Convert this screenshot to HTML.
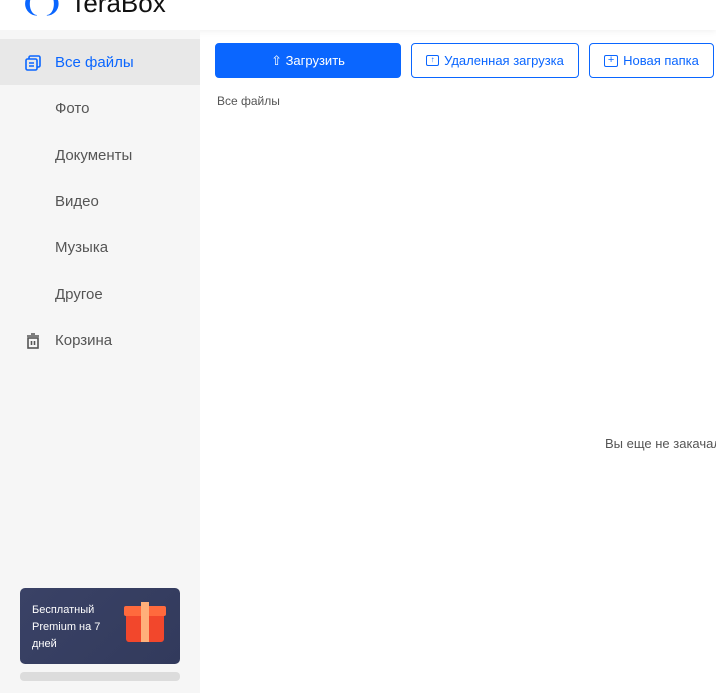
<!DOCTYPE html>
<html><head><meta charset="utf-8"><style>
*{margin:0;padding:0;box-sizing:border-box}
body{width:716px;height:693px;overflow:hidden;background:#fff;font-family:"Liberation Sans",sans-serif;position:relative}
.top{position:absolute;left:0;top:0;width:716px;height:30px;background:#fff;box-shadow:0 2px 6px rgba(0,0,0,.05)}
.logo{position:absolute;left:20px;top:-12px;font-size:26px;color:#111;font-weight:500}
.side{position:absolute;left:0;top:30px;width:200px;height:663px;background:#f6f6f6}
.item{position:absolute;left:0;width:200px;height:46px;font-size:15px;color:#555;padding-left:55px;line-height:48px}
.item.act{background:#e8e8e8;color:#0a66ff}
.ic{position:absolute;left:25px;top:16px}
.btn{position:absolute;top:43px;height:35px;border:1px solid #0a66ff;border-radius:4px;font-size:13px;color:#0a66ff;display:flex;align-items:center;justify-content:center;gap:5px}
.promo{position:absolute;left:20px;top:588px;width:160px;height:76px;border-radius:5px;background:linear-gradient(135deg,#3a4266,#323a5c);color:#fff;font-size:11px;line-height:17px;padding:14px 0 0 12px}
</style></head><body>
<div class="top"><div class="logo"><span style="color:#0a66ff">❨❩</span> TeraBox</div></div>
<div class="side">
<div class="item act" style="top:9px"><svg class="ic" width="16" height="16" viewBox="0 0 16 16"><rect x="4" y="1" width="11" height="11" rx="1.5" fill="none" stroke="#0a66ff" stroke-width="1.6"/><rect x="1" y="4" width="11" height="11" rx="1.5" fill="#e8e8e8" stroke="#0a66ff" stroke-width="1.6"/><path d="M4 8h5M4 11h5" stroke="#0a66ff" stroke-width="1.5"/></svg>Все файлы</div>
<div class="item" style="top:55px">Фото</div>
<div class="item" style="top:102px">Документы</div>
<div class="item" style="top:148px">Видео</div>
<div class="item" style="top:194px">Музыка</div>
<div class="item" style="top:241px">Другое</div>
<div class="item" style="top:287px"><svg class="ic" width="16" height="16" viewBox="0 0 16 16"><path d="M2 3h12M6 1h4" stroke="#555" stroke-width="1.6"/><rect x="3" y="5" width="10" height="10" fill="none" stroke="#555" stroke-width="1.6"/><path d="M6.5 8v4M9.5 8v4" stroke="#555" stroke-width="1.6"/></svg>Корзина</div>
</div>
<div class="promo">Бесплатный<br>Premium на 7<br>дней
<div style="position:absolute;left:106px;top:24px;width:38px;height:30px;background:#f2472c;border-radius:3px"></div>
<div style="position:absolute;left:104px;top:18px;width:42px;height:10px;background:#ff6a3d;border-radius:2px"></div>
<div style="position:absolute;left:121px;top:14px;width:8px;height:40px;background:#ffb07a"></div>
</div>
<div style="position:absolute;left:20px;top:672px;width:160px;height:9px;border-radius:4px;background:#dcdcdc"></div>
<div class="btn" style="left:215px;width:186px;background:#0a66ff;color:#fff">⇧ Загрузить</div>
<div class="btn" style="left:411px;width:168px"><span style="display:inline-block;width:13px;height:11px;border:1.6px solid #0a66ff;border-radius:2px;font-size:8px;line-height:8px;text-align:center">↑</span>Удаленная загрузка</div>
<div class="btn" style="left:589px;width:125px"><span style="display:inline-block;width:14px;height:12px;border:1.6px solid #0a66ff;border-radius:2px;font-size:11px;line-height:9px;text-align:center">+</span>Новая папка</div>
<div style="position:absolute;left:217px;top:94px;font-size:12px;color:#555">Все файлы</div>
<div style="position:absolute;left:605px;top:436px;font-size:13px;color:#555;white-space:nowrap">Вы еще не закачали</div>
</body></html>
